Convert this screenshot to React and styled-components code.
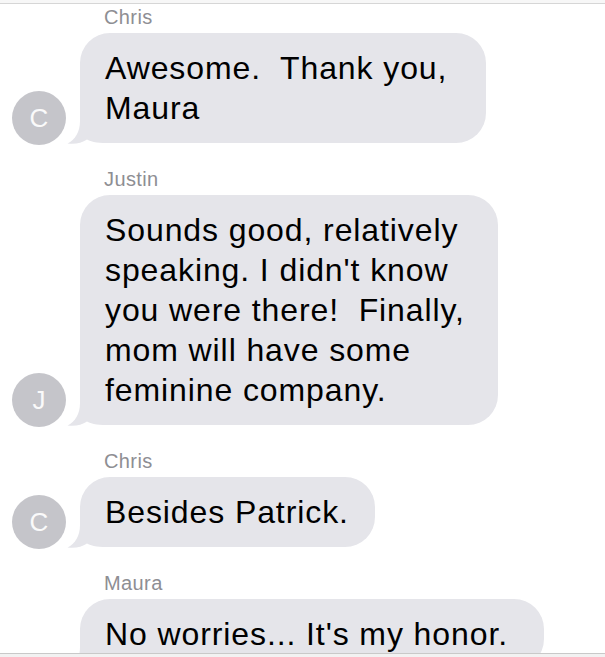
import React from "react";
import styled, { createGlobalStyle } from "styled-components";

const messages = [
  { id: 1, from: "Chris", initial: "C", width: 406, text: "Awesome.  Thank you,\nMaura" },
  {
    id: 2,
    from: "Justin",
    initial: "J",
    width: 418,
    text:
      "Sounds good, relatively\nspeaking. I didn't know\nyou were there!  Finally,\nmom will have some\nfeminine company.",
  },
  { id: 3, from: "Chris", initial: "C", width: 295, text: "Besides Patrick." },
  { id: 4, from: "Maura", initial: null, width: 464, text: "No worries... It's my honor." },
];

function Tail() {
  return (
    <TailSvg viewBox="-14 -32 44 34" width="44" height="34">
      <path
        d="M0 -30 L0 -22 C0 -11 -5 -3 -12.5 0.5 C-5 1.5 2 0 7 -3.5 C12 -0.5 20 0 30 0 L30 -30 Z"
        fill="#e5e5ea"
      />
    </TailSvg>
  );
}

function Message({ from, initial, width, text }) {
  return (
    <Group>
      <Sender>{from}</Sender>
      <Row>
        <AvatarSlot>{initial && <Avatar>{initial}</Avatar>}</AvatarSlot>
        <Bubble $width={width}>
          <Tail />
          <BubbleText>{text}</BubbleText>
        </Bubble>
      </Row>
    </Group>
  );
}

function App() {
  return (
    <>
      <GlobalStyle />
      <Screen>
        <TopEdge />
        <Thread>
          {messages.map((m) => (
            <Message key={m.id} {...m} />
          ))}
        </Thread>
        <BottomEdge />
      </Screen>
    </>
  );
}

const GlobalStyle = createGlobalStyle`
  html, body {
    margin: 0;
    padding: 0;
    background: #ffffff;
  }
  body {
    font-family: "Liberation Sans", Arial, sans-serif;
  }
`;

const Screen = styled.div`
  width: 605px;
  height: 657px;
  display: flex;
  flex-direction: column;
  overflow: hidden;
  background: #ffffff;
`;

const TopEdge = styled.div`
  height: 3px;
  flex-shrink: 0;
  background: #f7f7f7;
  border-bottom: 1px solid #d6d6d6;
`;

const BottomEdge = styled.div`
  height: 3px;
  flex-shrink: 0;
  background: #f2f2f2;
  border-top: 1px solid #c9c9c9;
`;

const Thread = styled.div`
  flex: 1;
  overflow: hidden;
  padding-top: 2px;
  display: flex;
  flex-direction: column;
  gap: 25px;
`;

const Group = styled.div`
  display: flex;
  flex-direction: column;
  gap: 5px;
`;

const Sender = styled.div`
  margin-left: 104px;
  font-size: 20px;
  line-height: 22px;
  color: #8e8e93;
  letter-spacing: 0.4px;
`;

const Row = styled.div`
  display: flex;
  align-items: flex-end;
`;

const AvatarSlot = styled.div`
  width: 54px;
  margin: 0 14px 0 12px;
  flex-shrink: 0;
`;

const Avatar = styled.div`
  width: 54px;
  height: 54px;
  border-radius: 50%;
  background: #c5c5ca;
  color: #fafafa;
  display: flex;
  align-items: center;
  justify-content: center;
  font-size: 26px;
  transform: translateY(2px);
`;

const Bubble = styled.div`
  position: relative;
  width: ${(p) => p.$width}px;
  box-sizing: border-box;
  padding: 15px 20px 15px 25px;
  background: #e5e5ea;
  border-radius: 30px;
`;

const TailSvg = styled.svg`
  position: absolute;
  left: -14px;
  bottom: -2px;
  display: block;
`;

const BubbleText = styled.div`
  position: relative;
  font-size: 32px;
  line-height: 40px;
  letter-spacing: 0.9px;
  color: #000000;
  white-space: pre-wrap;
`;

export default App;
